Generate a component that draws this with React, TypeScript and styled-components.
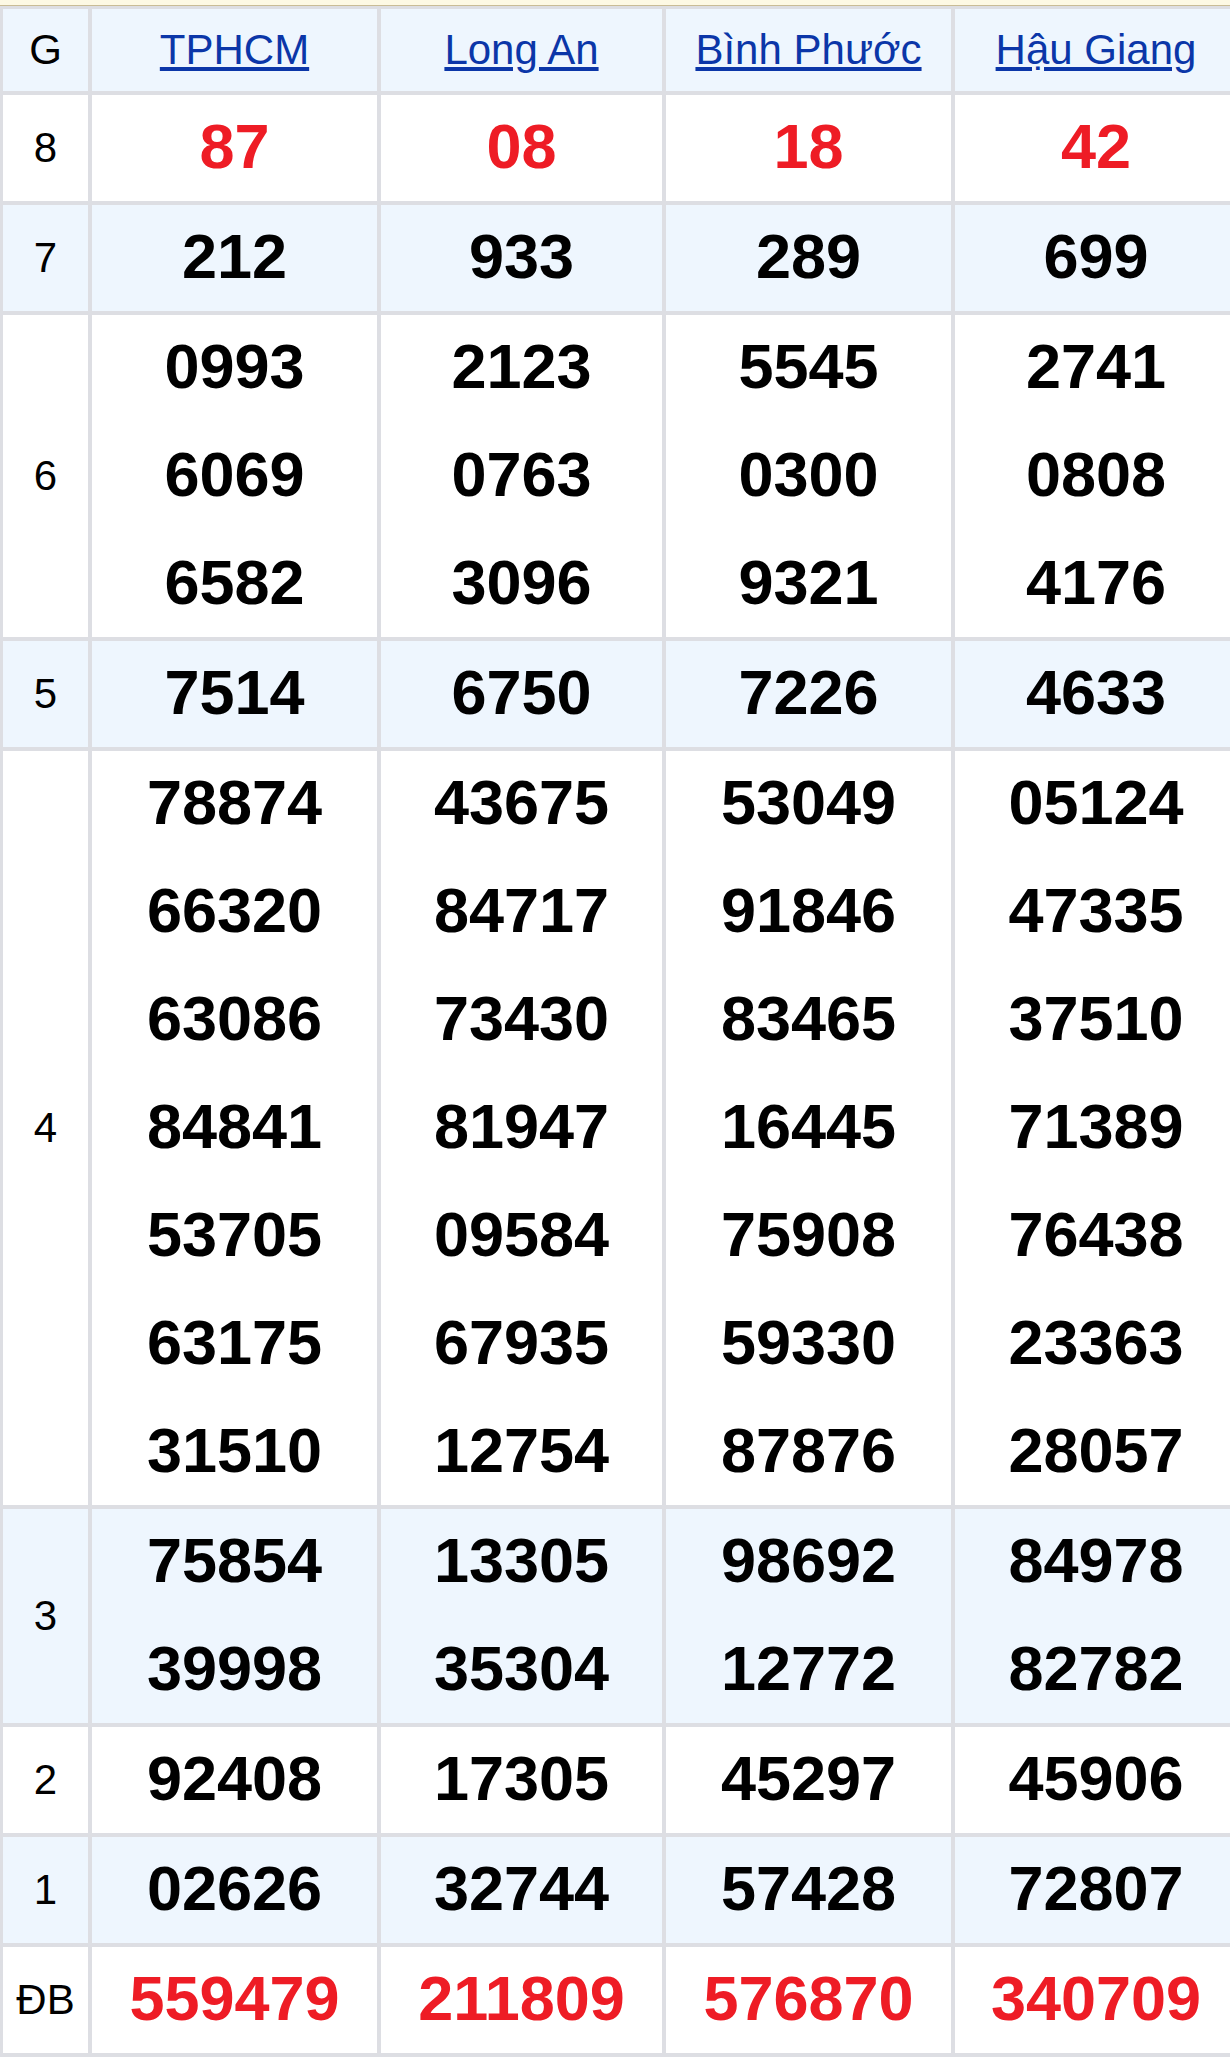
import React from "react";
import styled, { createGlobalStyle } from "styled-components";

const GlobalStyle = createGlobalStyle`
  html, body {
    margin: 0;
    padding: 0;
    background: #ffffff;
    font-family: "Liberation Sans", Arial, sans-serif;
    overflow-x: hidden;
  }
`;

const provinces = ["TPHCM", "Long An", "Bình Phước", "Hậu Giang"];

type Prize = { label: string; red?: boolean; cols: string[][] };

const prizes: Prize[] = [
  { label: "8", red: true, cols: [["87"], ["08"], ["18"], ["42"]] },
  { label: "7", cols: [["212"], ["933"], ["289"], ["699"]] },
  {
    label: "6",
    cols: [
      ["0993", "6069", "6582"],
      ["2123", "0763", "3096"],
      ["5545", "0300", "9321"],
      ["2741", "0808", "4176"],
    ],
  },
  { label: "5", cols: [["7514"], ["6750"], ["7226"], ["4633"]] },
  {
    label: "4",
    cols: [
      ["78874", "66320", "63086", "84841", "53705", "63175", "31510"],
      ["43675", "84717", "73430", "81947", "09584", "67935", "12754"],
      ["53049", "91846", "83465", "16445", "75908", "59330", "87876"],
      ["05124", "47335", "37510", "71389", "76438", "23363", "28057"],
    ],
  },
  {
    label: "3",
    cols: [
      ["75854", "39998"],
      ["13305", "35304"],
      ["98692", "12772"],
      ["84978", "82782"],
    ],
  },
  { label: "2", cols: [["92408"], ["17305"], ["45297"], ["45906"]] },
  { label: "1", cols: [["02626"], ["32744"], ["57428"], ["72807"]] },
  {
    label: "ĐB",
    red: true,
    cols: [["559479"], ["211809"], ["576870"], ["340709"]],
  },
];

const App = () => (
  <>
    <GlobalStyle />
    <TopBar />
    <Frame>
      <Table>
        <Cell $alt $header>
          <Label>G</Label>
        </Cell>
        {provinces.map(p => (
          <Cell key={p} $alt $header>
            <ProvinceLink href="#">{p}</ProvinceLink>
          </Cell>
        ))}
        {prizes.map((prize, i) => {
          const alt = i % 2 === 1;
          return (
            <React.Fragment key={prize.label}>
              <Cell $alt={alt}>
                <Label>{prize.label}</Label>
              </Cell>
              {prize.cols.map((nums, c) => (
                <Cell key={c} $alt={alt}>
                  <NumList>
                    {nums.map((n, k) => (
                      <Num key={k} $red={prize.red}>
                        {n}
                      </Num>
                    ))}
                  </NumList>
                </Cell>
              ))}
            </React.Fragment>
          );
        })}
      </Table>
    </Frame>
  </>
);

// Styles

const TopBar = styled.div`
  height: 5px;
  background: #fdf9e4;
  border-bottom: 1px solid #c9bc96;
`;

const Frame = styled.div`
  width: 100%;
  overflow: hidden;
`;

const Table = styled.div`
  display: grid;
  grid-template-columns: 85px 285px 281px 285px 282px;
  gap: 4px;
  width: max-content;
  padding: 3px 4px 4px 3px;
  background: #dddee3;
`;

const Cell = styled.div<{ $alt?: boolean; $header?: boolean }>`
  display: flex;
  align-items: center;
  justify-content: center;
  background: ${p => (p.$alt ? "#eef6fe" : "#ffffff")};
  height: ${p => (p.$header ? "82px" : "auto")};
`;

const Label = styled.span`
  font-size: 42px;
  color: #000000;
`;

const ProvinceLink = styled.a`
  font-size: 42px;
  color: #0b36a8;
  text-decoration: underline;
`;

const NumList = styled.div`
  display: flex;
  flex-direction: column;
  align-items: center;
  margin: -3px 0 1px;
`;

const Num = styled.div<{ $red?: boolean }>`
  font-size: 63px;
  font-weight: bold;
  line-height: 108px;
  color: ${p => (p.$red ? "#ee1c25" : "#000000")};
`;

// Export

export default App;
